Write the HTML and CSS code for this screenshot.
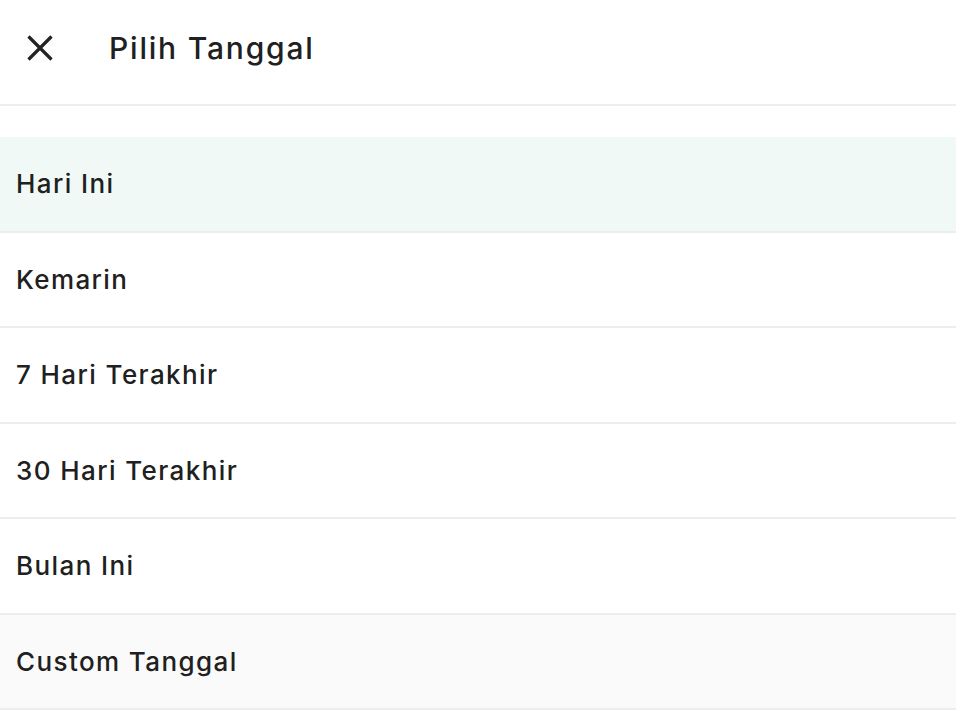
FILE: index.html
```html
<!DOCTYPE html>
<html lang="id">
<head>
<meta charset="utf-8">
<title>Pilih Tanggal</title>
<link rel="stylesheet" href="styles.css">
</head>
<body>
<div class="sheet">
  <header class="header">
    <button class="close" aria-label="Tutup">
      <svg width="28" height="28" viewBox="0 0 28 28"><path d="M2.5 2.5 L25.5 25.5 M25.5 2.5 L2.5 25.5" stroke="#222" stroke-width="3.2" stroke-linecap="butt" fill="none"/></svg>
    </button>
    <h1 class="title">Pilih Tanggal</h1>
  </header>
  <ul class="list">
    <li class="item active">Hari Ini</li>
    <li class="item">Kemarin</li>
    <li class="item">7 Hari Terakhir</li>
    <li class="item">30 Hari Terakhir</li>
    <li class="item">Bulan Ini</li>
    <li class="item muted">Custom Tanggal</li>
  </ul>
</div>
</body>
</html>
```

FILE: styles.css
```css
html, body {
  margin: 0;
  padding: 0;
  background: #ffffff;
}
body {
  font-family: "Inter", "DejaVu Sans", sans-serif;
  color: #202020;
}
.sheet {
  width: 956px;
}
.header {
  display: flex;
  align-items: center;
  height: 96px;
  padding: 0 0 8px 26px;
  border-bottom: 2px solid #eeeeee;
}
.close {
  display: flex;
  align-items: center;
  justify-content: center;
  width: 28px;
  height: 28px;
  padding: 0;
  margin: 0;
  border: 0;
  background: none;
}
.title {
  margin: 0 0 0 55px;
  font-size: 30px;
  font-weight: 500;
  letter-spacing: 1.8px;
}
.list {
  list-style: none;
  margin: 0;
  padding: 31px 0 0 0;
}
.item {
  display: flex;
  align-items: center;
  height: 93.5px;
  padding-left: 16px;
  border-bottom: 2px solid #ededed;
  font-size: 26px;
  font-weight: 500;
  letter-spacing: 1.4px;
}
.item.active {
  background: #f0f9f6;
}
.item.muted {
  background: #fafafa;
}
```
